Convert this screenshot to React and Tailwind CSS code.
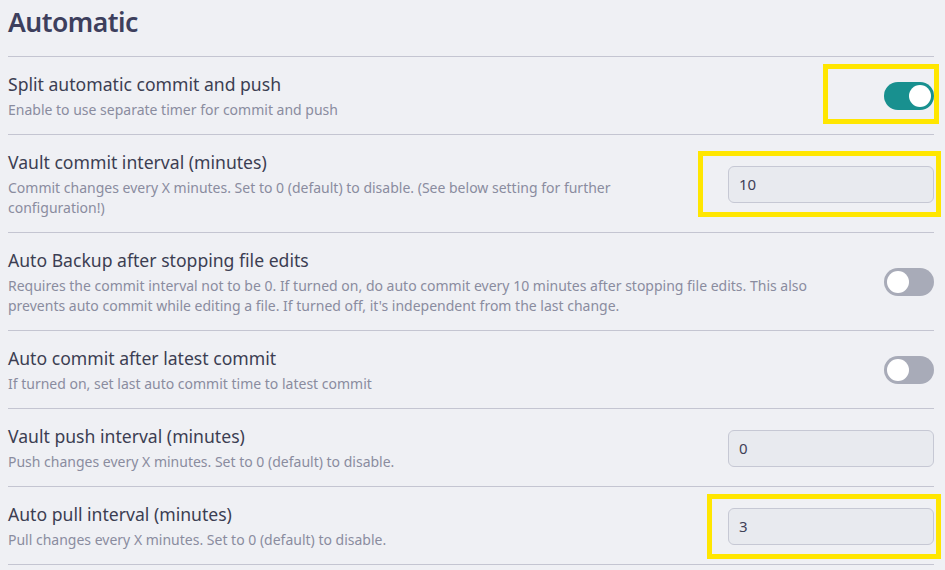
import { useState } from 'react';

const font = { fontFamily: '"Noto Sans", "Open Sans", sans-serif' };

function Toggle({ on }) {
  return (
    <div className={`w-[50px] h-[28px] rounded-full shrink-0 flex items-center px-[3px] ${on ? 'bg-[#18908f] justify-end' : 'bg-[#a8abb8] justify-start'}`}>
      <div className="w-[22px] h-[22px] rounded-full bg-white" />
    </div>
  );
}

function NumInput({ value }) {
  return (
    <div className="w-[206px] h-[37px] shrink-0 rounded-[6px] border border-[#c6c8d4] bg-[#e8eaef] flex items-center px-[10px] text-[15px] text-[#3f4157]">
      {value}
    </div>
  );
}

function Highlight({ className }) {
  return <div className={`absolute border-[5px] border-[#ffe600] pointer-events-none ${className}`} />;
}

function Row({ title, desc, control, children, last, infoClass = 'flex-1' }) {
  return (
    <div className={`relative flex items-center justify-between gap-4 border-t border-[#c4c5d1] pt-[15px] pb-[14px] ${last ? 'border-b' : ''}`}>
      <div className={`min-w-0 ${infoClass}`}>
        <div className="text-[17.6px] leading-[24px] text-[#3c3e52]">{title}</div>
        <div className="mt-1 text-[14px] leading-[20px] text-[#8a8c9f]">{desc}</div>
      </div>
      {control}
      {children}
    </div>
  );
}

export default function App() {
  const [open] = useState(true);
  return (
    <div className="min-h-screen bg-[#eff0f4] pl-2 pr-[11px]" style={font}>
      <h2 className="h-[56px] pt-[4px] text-[26.5px] leading-[36px] font-semibold tracking-[-0.5px] text-[#3d3f5d]">Automatic</h2>

      <Row
        title="Split automatic commit and push"
        desc="Enable to use separate timer for commit and push"
        control={<Toggle on={open} />}
      >
        <Highlight className="left-[815px] top-[7px] w-[116px] h-[60px]" />
      </Row>

      <Row
        title="Vault commit interval (minutes)"
        desc="Commit changes every X minutes. Set to 0 (default) to disable. (See below setting for further configuration!)"
        control={<NumInput value="10" />}
        infoClass="w-[670px]"
      >
        <Highlight className="left-[690px] top-[16px] w-[243px] h-[66px]" />
      </Row>

      <Row
        title="Auto Backup after stopping file edits"
        desc="Requires the commit interval not to be 0. If turned on, do auto commit every 10 minutes after stopping file edits. This also prevents auto commit while editing a file. If turned off, it's independent from the last change."
        control={<Toggle />}
        infoClass="w-[840px]"
      />

      <Row
        title="Auto commit after latest commit"
        desc="If turned on, set last auto commit time to latest commit"
        control={<Toggle />}
      />

      <Row
        title="Vault push interval (minutes)"
        desc="Push changes every X minutes. Set to 0 (default) to disable."
        control={<NumInput value="0" />}
      />

      <Row
        title="Auto pull interval (minutes)"
        desc="Pull changes every X minutes. Set to 0 (default) to disable."
        control={<NumInput value="3" />}
        last
      >
        <Highlight className="left-[699px] top-[7px] w-[234px] h-[65px]" />
      </Row>
    </div>
  );
}
